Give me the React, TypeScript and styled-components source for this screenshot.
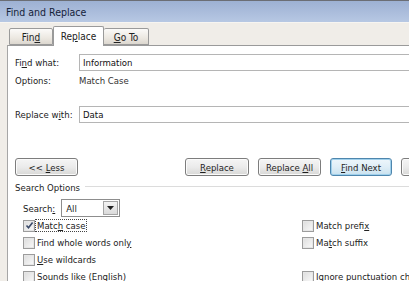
import React from 'react';
import styled, { createGlobalStyle } from 'styled-components';

const GlobalStyle = createGlobalStyle`
  html, body {
    margin: 0;
    padding: 0;
    background: #ffffff;
    overflow: hidden;
  }
  body {
    font-family: 'DejaVu Sans Condensed', 'Liberation Sans', Arial, sans-serif;
    font-size: 9.5px;
    color: #1a1a1a;
  }
`;

// Window chrome
const Window = styled.div`
  width: 480px;
  height: 281px;
  overflow: hidden;
  background: #f0ede8;
  display: flex;
  flex-direction: column;
`;

const TitleBar = styled.div`
  flex-shrink: 0;
  height: 21px;
  border-top: 1px solid #6b6e75;
  background: linear-gradient(to bottom, #9db1d3 0%, #aabcdb 50%, #b7c8e3 100%);
  display: flex;
  align-items: center;
  padding-left: 6px;
  font-size: 10.5px;
  color: #15223a;
`;

const TabStrip = styled.div`
  flex-shrink: 0;
  box-sizing: border-box;
  height: 23px;
  display: flex;
  align-items: flex-end;
  padding-left: 9px;
  border-top: 1px solid #f7f5f1;
`;

const Tab = styled.div<{ $active?: boolean; $first?: boolean; $w: number }>`
  box-sizing: border-box;
  height: ${(p) => (p.$active ? 20 : 17)}px;
  width: ${(p) => p.$w}px;
  border: 1px solid #9a9a9a;
  border-bottom: ${(p) => (p.$active ? 'none' : '1px solid #9a9a9a')};
  border-left: ${(p) => (p.$first || p.$active ? '1px solid #9a9a9a' : 'none')};
  border-radius: 2px 2px 0 0;
  background: ${(p) =>
    p.$active
      ? '#ffffff'
      : 'linear-gradient(to bottom, #fbfaf8 0%, #ece8e1 60%, #dcd7cf 100%)'};
  margin-bottom: ${(p) => (p.$active ? -1 : 0)}px;
  position: relative;
  z-index: ${(p) => (p.$active ? 2 : 1)};
  display: flex;
  align-items: center;
  justify-content: center;
  padding-top: ${(p) => (p.$active ? 0 : 1)}px;
  font-size: 10px;
  color: #222;
`;

const Panel = styled.div`
  flex: 1;
  min-height: 0;
  overflow: hidden;
  margin-left: 7px;
  background: #ffffff;
  border-top: 1px solid #9a9a9a;
  border-left: 1px solid #a6a6a6;
  padding-left: 7px;
  display: flex;
  flex-direction: column;
`;

// Field rows
const FieldRow = styled.div<{ $mt: number; $h: number }>`
  flex-shrink: 0;
  display: flex;
  align-items: center;
  margin-top: ${(p) => p.$mt}px;
  height: ${(p) => p.$h}px;
`;

const Label = styled.div`
  width: 64px;
  flex-shrink: 0;
  color: #222;
`;

const TextBox = styled.div`
  flex: 1;
  box-sizing: border-box;
  height: 100%;
  border: 1px solid #b5b5b5;
  border-right: none;
  display: flex;
  align-items: center;
  padding-left: 3px;
  color: #111;
`;

const Value = styled.div`
  color: #333;
`;

// Buttons
const ButtonRow = styled.div`
  flex-shrink: 0;
  display: flex;
  margin-top: 35px;
  height: 18px;
`;

const ButtonGroup = styled.div`
  display: flex;
  gap: 9px;
  margin-left: 107px;
`;

const Button = styled.div<{ $w: number; $default?: boolean }>`
  box-sizing: border-box;
  width: ${(p) => p.$w}px;
  height: 18px;
  border: 1px solid ${(p) => (p.$default ? '#4e86ad' : '#7d7d7d')};
  border-radius: 3px;
  background: ${(p) =>
    p.$default
      ? 'linear-gradient(to bottom, #eef6fb 0%, #dfeef7 50%, #c9e1ee 100%)'
      : 'linear-gradient(to bottom, #f5f5f5 0%, #ebebeb 50%, #d8d8d6 100%)'};
  box-shadow: ${(p) =>
    p.$default ? 'inset 0 0 0 1px #9fd0ec' : 'inset 0 0 0 1px #fbfbfb'};
  display: flex;
  align-items: center;
  justify-content: center;
  color: #1e1e1e;
`;

// Search options group
const GroupHeader = styled.div`
  flex-shrink: 0;
  display: flex;
  align-items: center;
  margin-top: 4px;
  height: 14px;
  color: #222;
  gap: 5px;
`;

const GroupLine = styled.div`
  flex: 1;
  height: 1px;
  background: #dcdcdc;
  margin-top: -1px;
`;

const OptionsArea = styled.div`
  flex-shrink: 0;
  padding-left: 8px;
  display: flex;
  flex-direction: column;
`;

const SearchRow = styled.div`
  display: flex;
  align-items: center;
  margin-top: 5px;
  height: 18px;
  gap: 6px;
`;

const Select = styled.div`
  box-sizing: border-box;
  width: 59px;
  height: 18px;
  border: 1px solid #8d8d8d;
  display: flex;
  align-items: center;
  padding-left: 4px;
  position: relative;
`;

const SelectButton = styled.div`
  position: absolute;
  right: 1px;
  top: 1px;
  bottom: 1px;
  width: 15px;
  box-sizing: border-box;
  border: 1px solid #a5a5a5;
  background: linear-gradient(to bottom, #f4f4f4, #dadada);
  display: flex;
  align-items: center;
  justify-content: center;
`;

const CheckGrid = styled.div`
  display: grid;
  grid-template-columns: 279px auto;
  grid-auto-rows: 17px;
`;

const CheckItem = styled.div`
  display: flex;
  align-items: center;
  gap: 1px;
  white-space: nowrap;
  color: #222;
`;

const Box = styled.div`
  box-sizing: border-box;
  width: 12px;
  height: 12px;
  border: 1px solid #9c9c9c;
  background: linear-gradient(135deg, #dcdcdc 0%, #eeeeee 60%, #fafafa 100%);
  box-shadow: inset 0 0 0 1px #e6e6e6;
  display: flex;
  align-items: center;
  justify-content: center;
`;

const FocusText = styled.span<{ $focus?: boolean }>`
  padding: 0 1px;
  outline: ${(p) => (p.$focus ? '1px dotted #444' : 'none')};
  outline-offset: 0;
`;

const U = styled.span`
  text-decoration: underline;
`;

const Check = ({
  label,
  checked,
  focus,
}: {
  label: React.ReactNode;
  checked?: boolean;
  focus?: boolean;
}) => (
  <CheckItem>
    <Box>
      {checked && (
        <svg width="9" height="9" viewBox="0 0 9 9">
          <path d="M1.5 4.5 L3.5 6.8 L7.6 1.6" stroke="#3a4a6a" strokeWidth="1.6" fill="none" />
        </svg>
      )}
    </Box>
    <FocusText $focus={focus}>{label}</FocusText>
  </CheckItem>
);

const App: React.FC = () => {
  return (
    <>
      <GlobalStyle />
      <Window>
        <TitleBar>Find and Replace</TitleBar>
        <TabStrip>
          <Tab $w={44} $first>
            <span>
              Fin<U>d</U>
            </span>
          </Tab>
          <Tab $w={51} $active>
            <span>
              Re<U>p</U>lace
            </span>
          </Tab>
          <Tab $w={45}>
            <span>
              <U>G</U>o To
            </span>
          </Tab>
        </TabStrip>
        <Panel>
          <FieldRow $mt={8} $h={17}>
            <Label>
              Fi<U>n</U>d what:
            </Label>
            <TextBox>Information</TextBox>
          </FieldRow>
          <FieldRow $mt={1} $h={17}>
            <Label>Options:</Label>
            <Value>Match Case</Value>
          </FieldRow>
          <FieldRow $mt={17} $h={17}>
            <Label>
              Replace w<U>i</U>th:
            </Label>
            <TextBox>Data</TextBox>
          </FieldRow>

          <ButtonRow>
            <Button $w={63}>
              <span>
                &lt;&lt; <U>L</U>ess
              </span>
            </Button>
            <ButtonGroup>
              <Button $w={64}>
                <span>
                  <U>R</U>eplace
                </span>
              </Button>
              <Button $w={63}>
                <span>
                  Replace <U>A</U>ll
                </span>
              </Button>
              <Button $w={62} $default>
                <span>
                  <U>F</U>ind Next
                </span>
              </Button>
              <Button $w={63}>Cancel</Button>
            </ButtonGroup>
          </ButtonRow>

          <GroupHeader>
            <span>Search Options</span>
            <GroupLine />
          </GroupHeader>

          <OptionsArea>
            <SearchRow>
              <span>
                Search<U>:</U>
              </span>
              <Select>
                All
                <SelectButton>
                  <svg width="7" height="4" viewBox="0 0 7 4">
                    <path d="M0 0 H7 L3.5 4 Z" fill="#222" />
                  </svg>
                </SelectButton>
              </Select>
            </SearchRow>
            <CheckGrid>
              <Check
                checked
                focus
                label={
                  <>
                    Matc<U>h</U> case
                  </>
                }
              />
              <Check
                label={
                  <>
                    Match prefi<U>x</U>
                  </>
                }
              />
              <Check
                label={
                  <>
                    Find whole words onl<U>y</U>
                  </>
                }
              />
              <Check
                label={
                  <>
                    Ma<U>t</U>ch suffix
                  </>
                }
              />
              <Check
                label={
                  <>
                    <U>U</U>se wildcards
                  </>
                }
              />
              <div />
              <Check
                label={
                  <>
                    Sounds li<U>k</U>e (English)
                  </>
                }
              />
              <Check
                label={
                  <>
                    <U>I</U>gnore punctuation characters
                  </>
                }
              />
            </CheckGrid>
          </OptionsArea>
        </Panel>
      </Window>
    </>
  );
};

export default App;
